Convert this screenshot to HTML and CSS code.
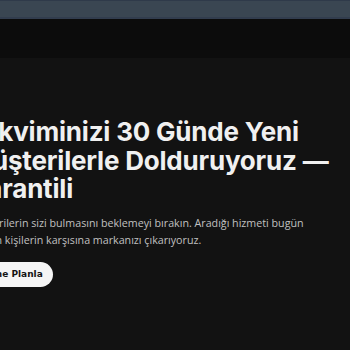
FILE: index.html
```html
<!DOCTYPE html>
<html lang="tr">
    <head>
        <meta charset="UTF-8">
        <meta name="viewport" content="width=device-width, initial-scale=1.0">
        <title>Görüşme Planla</title>
        <link rel="stylesheet" href="styles.css">
    </head>
    <body>
        <div class="topbar"></div>
        <div class="nav"></div>
        <section class="hero">
            <h1 class="hero-title">Takviminizi 30 Günde Yeni Müşterilerle Dolduruyoruz — Garantili</h1>
            <p class="hero-text">Müşterilerin sizi bulmasını beklemeyi bırakın. Aradığı hizmeti bugün arayan kişilerin karşısına markanızı çıkarıyoruz.</p>
            <a class="cta" href="#">Görüşme Planla</a>
        </section>
    </body>
</html>
```

FILE: styles.css
```css
body {
    margin: 0;
    background-color: #121212;
    overflow: hidden;
}

.topbar {
    height: 16px;
    background-color: #3a4652;
    border-top: 1px solid #2f3a4a;
    border-bottom: 2px solid #323d4e;
}

.nav {
    height: 39px;
    background-color: #0c0c0c;
}

.hero {
    display: flex;
    flex-direction: column;
    align-items: flex-start;
    margin-left: -32px;
    padding-top: 60px;
    width: 400px;
}

.hero-title {
    font-family: Inter, "Liberation Sans", sans-serif;
    font-weight: 700;
    font-size: 26px;
    line-height: 28.5px;
    color: #f0f0f0;
    margin: 0;
    max-width: 385px;
    letter-spacing: -0.2px;
}

.hero-text {
    font-family: "Open Sans", sans-serif;
    font-size: 10.7px;
    line-height: 17.5px;
    color: #c0c0c0;
    margin: 11px 0 0;
    max-width: 345px;
}

.cta {
    margin: 12px 0 0 -14px;
    background-color: #f5f5f5;
    color: #141414;
    font-family: "DejaVu Sans", sans-serif;
    font-weight: 700;
    font-size: 9px;
    line-height: 25px;
    padding: 0 10px 0 9px;
    border-radius: 13px;
    text-decoration: none;
}
```
